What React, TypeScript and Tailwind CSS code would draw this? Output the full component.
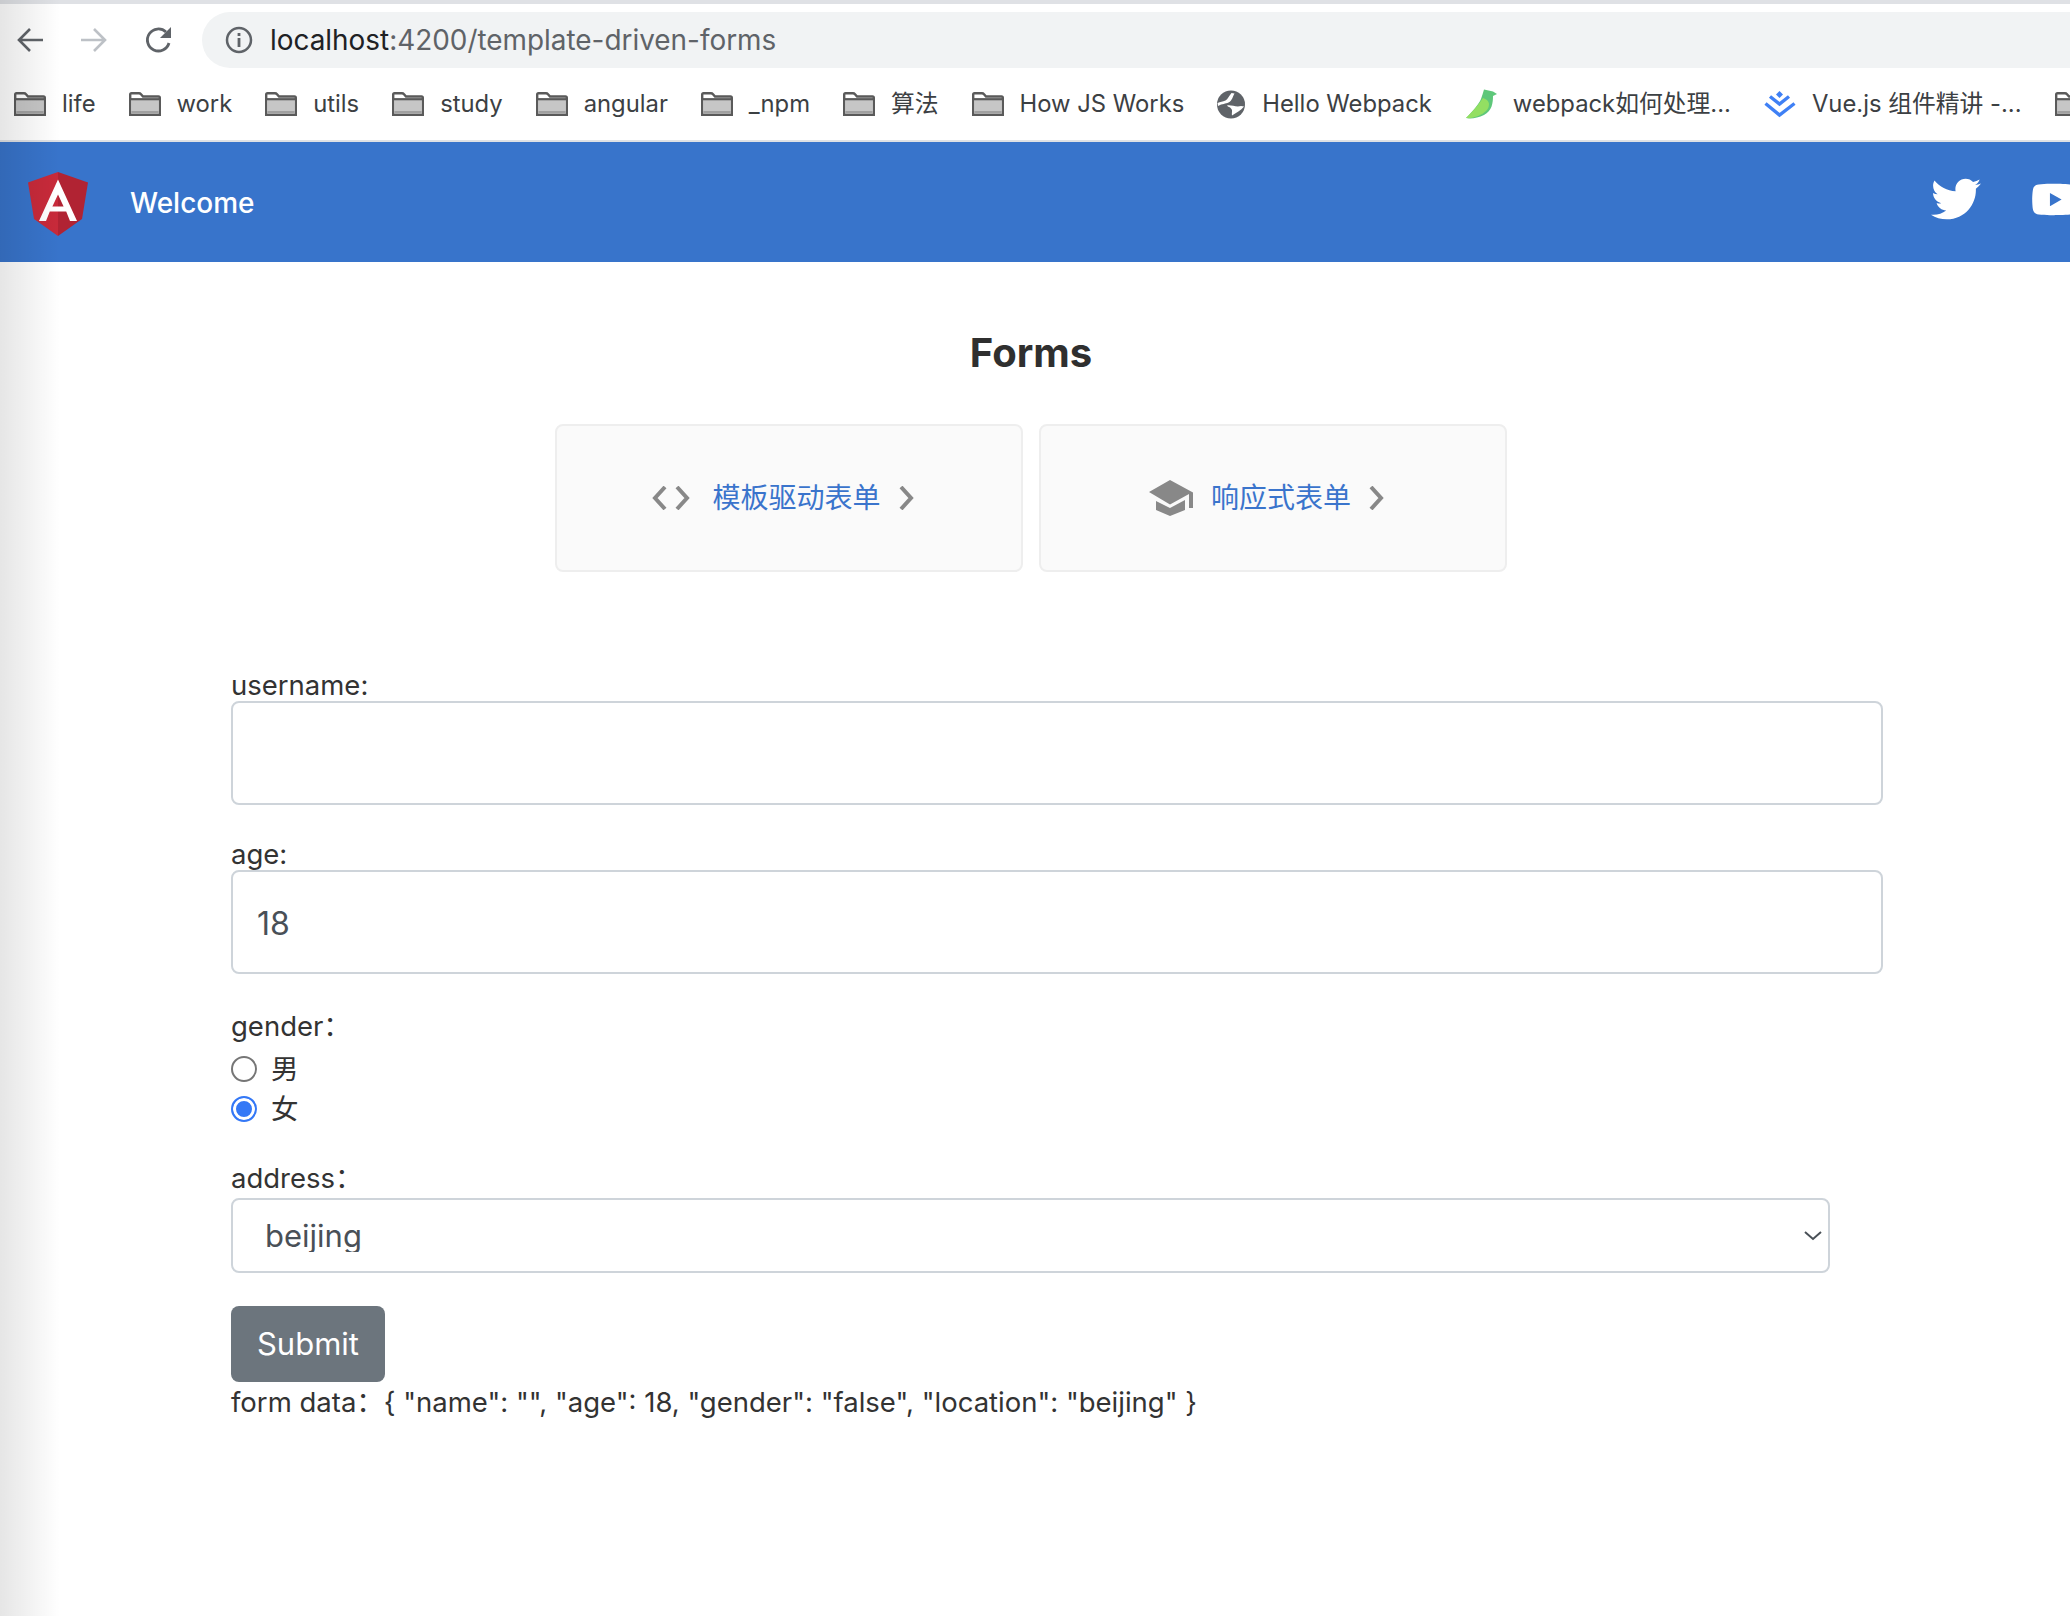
import { FaTwitter, FaYoutube } from "react-icons/fa"

const UI_FONT = "font-['Inter','Noto_Sans_CJK_SC',sans-serif]"

function FolderIcon() {
  return (
    <svg width="32" height="24" viewBox="0 0 32 24" className="shrink-0">
      <path d="M1.200 22.800V2.500c0-.7.600-1.300 1.300-1.300H10c1 0 1.500.4 2 1l2 2.300h15.500c.7 0 1.300.6 1.300 1.300v17H1.200Z" fill="#fff" stroke="#5a5a5a" strokeWidth="2.400" />
      <rect x="2.400" y="8" width="27.200" height="13.600" fill="#c6c6c6" />
      <rect x="2.400" y="19" width="27.200" height="2.600" fill="#a0a0a0" />
      <line x1="1.500" y1="7.200" x2="30.500" y2="7.200" stroke="#5a5a5a" strokeWidth="2.200" />
    </svg>
  )
}

function GlobeIcon() {
  return (
    <svg width="28" height="29" viewBox="0 0 28 29" className="shrink-0">
      <circle cx="14" cy="14.500" r="14" fill="#5f6368" />
      <path d="M.5 13c3-1.500 5-1 8-2.500 2.500-1.500 3-4 6-7.500l3 .5c-2 3-2 7-6 9-3 1.500-6 1-10.500 3.500Z" fill="#fff" />
      <path d="M10 15.500c4-1 9 2 14 .5l3 .5c-3 4-8 6-12 9-.5-3.500 1-5-1-7-1-1.500-3-1.500-4-3Z" fill="#fff" />
    </svg>
  )
}

function BirdIcon() {
  return (
    <svg width="32" height="30" viewBox="0 0 32 30" className="shrink-0">
      <path d="M19 .5 28 2.500 32 5l-4 2c0 7-1 15-9 19-6 3-13 4-18 3C8 22 14 15 16 10c1-3 2-6 3-9.500Z" fill="#5ec77a" />
      <path d="M1 29C8 22 14 15 18 9c3 1 6 3 6 6 0 3-1 5-3 7-4 4-13 8-20 7Z" fill="#93df62" />
    </svg>
  )
}

function JuejinIcon() {
  return (
    <svg width="32" height="27" viewBox="0 0 32 27" className="shrink-0">
      <path d="M15.500 0 19 3.500 15.500 7 12 3.500Z" fill="#3f80f5" />
      <path d="M6 5.500 15.500 13 25 5.500" fill="none" stroke="#3f80f5" strokeWidth="3.400" />
      <path d="M1.500 12.500 15.500 24 30.500 12.500" fill="none" stroke="#3f80f5" strokeWidth="3.400" />
    </svg>
  )
}

function AngularLogo() {
  return (
    <svg width="60" height="64" viewBox="0 0 60 64" className="mt-1 shrink-0">
      <polygon points="30,0 0,10.500 6,47 30,64" fill="#c82a3a" />
      <polygon points="30,0 60,10.500 54,47 30,64" fill="#b12333" />
      <path d="M30 7.500 11 49h7l3.800-9.500h16.400L42 49h7L30 7.500Zm0 15 5.600 12H24.400L30 22.500Z" fill="#fff" />
    </svg>
  )
}

function CapIcon() {
  return (
    <svg width="44" height="36" viewBox="0 0 44 36" className="shrink-0">
      <path d="M21 0 0 12l21 12.500L40 14v14h4V12.500Z" fill="#888" />
      <path d="M7 21l14 7 15-8v10l-15 6-14-6Z" fill="#888" />
    </svg>
  )
}

function Chevron({ dir }: { dir: "left" | "right" }) {
  return (
    <svg width="16" height="24" viewBox="0 0 16 24" className="shrink-0">
      <path d={dir === "left" ? "M14 1 4 12l10 11" : "M2 1l10 11L2 23"} fill="none" stroke="#888" strokeWidth="4" />
    </svg>
  )
}

const BOOKMARKS = ["life", "work", "utils", "study", "angular", "_npm", "算法", "How JS Works"]

function CardLink({ icon, label }: { icon: React.ReactNode; label: string }) {
  return (
    <div className="flex h-[148px] w-[468px] items-center justify-center gap-[18px] rounded-lg border-2 border-[#eeeeee] bg-[#fafafa] pr-3">
      {icon}
      <span className="text-[28px] leading-none text-[#3a74cc]">{label}</span>
      <Chevron dir="right" />
    </div>
  )
}

export default function App() {
  return (
    <div className={`relative h-[1616px] w-[2070px] overflow-hidden bg-white ${UI_FONT}`}>
      {/* browser chrome */}
      <div className="h-1 bg-[#dfe1e5]" />
      <div className="flex h-16 items-start pt-2">
        <div className="flex h-14 w-[202px] items-center">
          <svg width="28" height="28" viewBox="0 0 28 28" className="ml-[16px] shrink-0">
            <path d="M27 14H3M14 3 3 14l11 11" fill="none" stroke="#5f6368" strokeWidth="2.600" />
          </svg>
          <svg width="28" height="28" viewBox="0 0 28 28" className="ml-[36px] shrink-0">
            <path d="M1 14h24M14 3l11 11-11 11" fill="none" stroke="#bdc1c6" strokeWidth="2.600" />
          </svg>
          <svg width="30" height="30" viewBox="0 0 30 30" className="ml-[36px] shrink-0">
            <path d="M25 18a11 11 0 1 1-3-11" fill="none" stroke="#5f6368" strokeWidth="2.800" />
            <path d="M27 2v11H16Z" fill="#5f6368" />
          </svg>
        </div>
        <div className="flex h-14 flex-1 items-center rounded-l-full bg-[#f1f3f4] pl-[23px]">
          <svg width="28" height="28" viewBox="0 0 28 28" className="shrink-0">
            <circle cx="14" cy="14" r="12" fill="none" stroke="#5f6368" strokeWidth="2.500" />
            <rect x="12.600" y="12" width="2.800" height="9" fill="#5f6368" />
            <rect x="12.600" y="7" width="2.800" height="3" fill="#5f6368" />
          </svg>
          <span className="ml-[17px] mt-[2px] text-[27.900px] leading-none whitespace-nowrap text-[#5f6368]">
            <span className="text-[#202124]">localhost</span>:4200/template-driven-forms
          </span>
        </div>
      </div>
      <div className="flex h-[74px] items-center gap-[33px] overflow-hidden border-b-2 border-[#dfe1e5] pl-[14px] text-[23.800px] leading-none whitespace-nowrap text-[#3c4043]">
        {BOOKMARKS.map((b) => (
          <div key={b} className="flex shrink-0 items-center gap-[16px]">
            <FolderIcon />
            <span>{b}</span>
          </div>
        ))}
        <div className="flex shrink-0 items-center gap-[17px]">
          <GlobeIcon />
          <span>Hello Webpack</span>
        </div>
        <div className="flex shrink-0 items-center gap-[16px]">
          <BirdIcon />
          <span>webpack如何处理...</span>
        </div>
        <div className="flex shrink-0 items-center gap-[16px]">
          <JuejinIcon />
          <span>Vue.js 组件精讲 -...</span>
        </div>
        <FolderIcon />
      </div>

      {/* app header */}
      <div className="flex h-[120px] items-center overflow-hidden bg-[#3874cb] pl-[28px] text-white">
        <AngularLogo />
        <span className="ml-[42px] mt-[2px] text-[28px] font-medium leading-none">Welcome</span>
        <div className="ml-auto -mr-[8px] mb-[6px] flex items-center gap-[50px]">
          <FaTwitter className="text-[50px]" />
          <FaYoutube className="text-[47px]" />
        </div>
      </div>

      {/* main */}
      <div className="ml-[555px] w-[952px] pt-[61px]">
        <h1 className="text-center text-[40px] font-bold leading-[60px] text-[#2f2f2f]">Forms</h1>
        <div className="mt-[41px] flex gap-4">
          <CardLink
            label="模板驱动表单"
            icon={
              <div className="mr-[3px] flex items-center gap-[8px]">
                <Chevron dir="left" />
                <Chevron dir="right" />
              </div>
            }
          />
          <CardLink label="响应式表单" icon={<CapIcon />} />
        </div>
      </div>

      <form className="ml-[231px] mt-[97px] w-[1652px] text-[27.500px] leading-8 text-[#333]">
        <label className="block">username:</label>
        <input className="block h-[104px] w-full rounded-lg border-2 border-[#ced4da] bg-white px-[24px] pt-[2px] text-[32px] text-[#495057] outline-none" />
        <label className="mt-[33px] block">age:</label>
        <input defaultValue="18" className="block h-[104px] w-full rounded-lg border-2 border-[#ced4da] bg-white px-[24px] pt-[2px] text-[32px] text-[#495057] outline-none" />
        <div className="mt-[36px]">gender：</div>
        <div className="mt-[7px]">
          <label className="flex h-10 items-center gap-[14px]">
            <input type="radio" name="gender" className="m-0 h-[26px] w-[26px] appearance-none rounded-full border-2 border-[#767676] bg-white checked:border-[#3478f6] checked:bg-[#3478f6] checked:shadow-[inset_0_0_0_3px_#fff]" />
            <span>男</span>
          </label>
          <label className="flex h-10 items-center gap-[14px]">
            <input type="radio" name="gender" defaultChecked className="m-0 h-[26px] w-[26px] appearance-none rounded-full border-2 border-[#767676] bg-white checked:border-[#3478f6] checked:bg-[#3478f6] checked:shadow-[inset_0_0_0_3px_#fff]" />
            <span>女</span>
          </label>
        </div>
        <label className="mt-[33px] block">address：</label>
        <div className="relative mt-1 w-[1599px]">
          <select className="block h-[75px] w-full appearance-none rounded-lg border-2 border-[#ced4da] bg-white pl-[32px] text-[31px] text-[#495057] outline-none">
            <option>beijing</option>
          </select>
          <svg width="18" height="10" viewBox="0 0 18 10" className="pointer-events-none absolute right-[8px] top-[33px]">
            <path d="M1 1l8 7 8-7" fill="none" stroke="#495057" strokeWidth="2" />
          </svg>
        </div>
        <button type="button" className="mt-[33px] block h-[76px] w-[154px] rounded-lg bg-[#6c757d] text-[31px] text-white">
          Submit
        </button>
        <div className="mt-[4px]">form data：{`{ "name": "", "age": 18, "gender": "false", "location": "beijing" }`}</div>
      </form>

      {/* edge shadow from the screenshot */}
      <div className="pointer-events-none absolute inset-y-0 left-0 w-[60px] bg-gradient-to-r from-black/10 to-transparent" />
    </div>
  )
}
